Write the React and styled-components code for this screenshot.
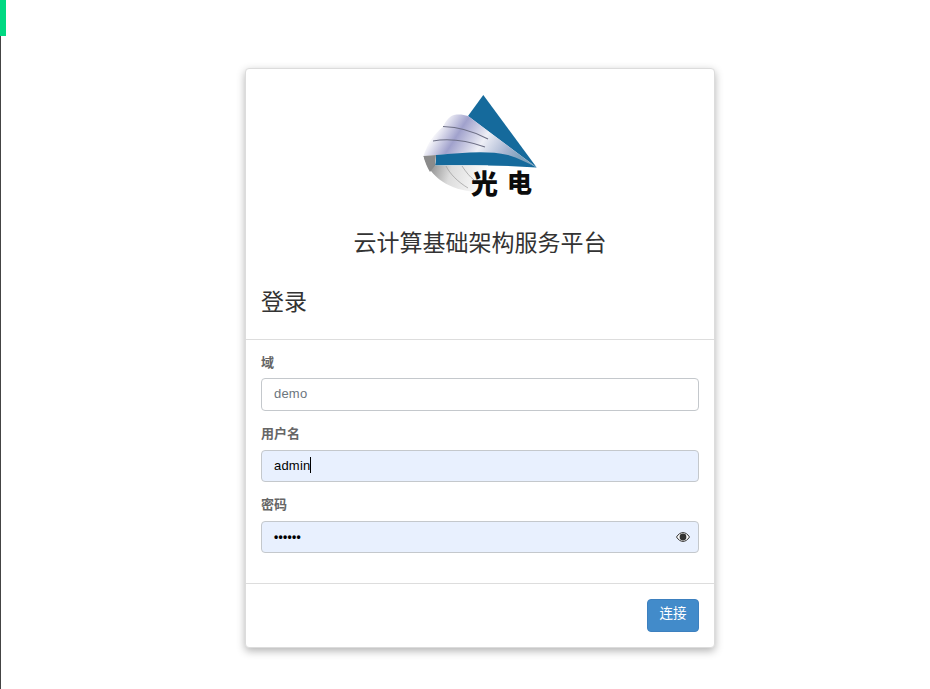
import React from 'react';
import styled, { createGlobalStyle } from 'styled-components';

const GlobalStyle = createGlobalStyle`
  html, body {
    margin: 0;
    padding: 0;
    background: #fff;
    font-family: "Liberation Sans", "Noto Sans CJK SC", sans-serif;
  }
`;

const Page = styled.div`
  width: 930px;
  height: 689px;
  overflow: hidden;
  position: relative;
  box-sizing: border-box;
  padding: 68px 0 0 245px;
`;

const SideLine = styled.div`
  position: absolute;
  left: 0;
  top: 36px;
  bottom: 0;
  width: 1px;
  background: #444;
`;

const Progress = styled.div`
  position: absolute;
  left: 0;
  top: 0;
  width: 6px;
  height: 36px;
  background: #00d982;
`;

const Card = styled.div`
  width: 470px;
  height: 580px;
  box-sizing: border-box;
  background: #fff;
  border: 1px solid #dcdcdc;
  border-radius: 4px;
  box-shadow: 0 3px 8px rgba(0, 0, 0, 0.3);
  display: flex;
  flex-direction: column;
`;

const LogoWrap = styled.div`
  height: 160px;
  padding-top: 26px;
  box-sizing: border-box;
  display: flex;
  justify-content: center;
`;

const Title = styled.h1`
  margin: 0;
  height: 28px;
  text-align: center;
  font-size: 23px;
  line-height: 28px;
  font-weight: 400;
  color: #333;
`;

const Header = styled.div`
  padding: 31px 15px 0;
  border-bottom: 1px solid #ddd;
  height: 83px;
  box-sizing: border-box;
`;

const Heading = styled.h2`
  margin: 0;
  font-size: 23px;
  line-height: 28px;
  font-weight: 400;
  color: #333;
`;

const Form = styled.div`
  padding: 13.6px 15px 0;
  height: 244px;
  box-sizing: border-box;
  border-bottom: 1px solid #ddd;
  display: flex;
  flex-direction: column;
  gap: 14.4px;
`;

const Field = styled.div`
  display: flex;
  flex-direction: column;
  gap: 6.6px;
`;

const Label = styled.label`
  font-size: 13px;
  line-height: 18px;
  height: 18px;
  font-weight: 700;
  color: #666;
`;

const InputBox = styled.div`
  position: relative;
  height: 32.4px;
  box-sizing: border-box;
  border: 1px solid #c4c8cc;
  border-radius: 4px;
  background: ${({ $filled }) => ($filled ? '#e8f0fe' : '#fff')};
  padding: 0 12px 1px;
  display: flex;
  align-items: center;
  font-size: 13px;
  letter-spacing: 0.2px;
  color: ${({ $filled }) => ($filled ? '#000' : '#6c757d')};
`;

const Caret = styled.span`
  display: inline-block;
  width: 1px;
  height: 16px;
  background: #000;
`;

const Dots = styled.span`
  font-size: 12px;
  letter-spacing: 0.3px;
  font-weight: 700;
`;

const EyeButton = styled.span`
  position: absolute;
  right: 8px;
  top: 8px;
  width: 14px;
  height: 14px;
  display: flex;
  align-items: center;
  justify-content: center;
`;

const Footer = styled.div`
  padding: 15px;
  display: flex;
  justify-content: flex-end;
`;

const ConnectButton = styled.button`
  width: 52px;
  height: 33px;
  border: 1px solid #3d80bf;
  border-radius: 4px;
  background: #428bca;
  color: #fff;
  font-family: inherit;
  font-size: 13.5px;
  line-height: 28px;
  padding: 0 0 3px;
`;

function Logo() {
  return (
    <svg width="120" height="110" viewBox="20 15 120 110">
      <defs>
        <linearGradient id="wing" x1="0" y1="0" x2="1" y2="0.3">
          <stop offset="0" stopColor="#d8d8de" />
          <stop offset="0.2" stopColor="#f4f4f9" />
          <stop offset="0.38" stopColor="#a0a1cc" />
          <stop offset="0.62" stopColor="#eeeff6" />
          <stop offset="0.85" stopColor="#a9b6d2" />
          <stop offset="1" stopColor="#7da2bd" />
        </linearGradient>
        <linearGradient id="under" x1="0" y1="0" x2="1" y2="0.15">
          <stop offset="0" stopColor="#6f6f6f" />
          <stop offset="0.45" stopColor="#dcdcdc" />
          <stop offset="1" stopColor="#ffffff" />
        </linearGradient>
      </defs>
      <polygon points="83.3,15 136.7,87.5 68,36" fill="#156a9c" />
      <path d="M23.5,76 C28,62 36,52 43,47 C46,40 50,36 54,35 C60,34 64,35 68,36 L136.7,87.5 C112,76 82,72 36,75 Z" fill="url(#wing)" />
      <path d="M43,46.5 C60,47 75,52 88,59" fill="none" stroke="#6d6f85" strokeWidth="1.1" />
      <path d="M33,61 C50,58 68,61 85,67" fill="none" stroke="#6d6f85" strokeWidth="1.1" />
      <path d="M36,75 C62,73 86,70 108,75 C118,78 128,83 136.7,87.5 C100,85 66,85 35,85.5 C36,82 36,78 36,75 Z" fill="#156a9c" />
      <path d="M23.5,76 C30,98 50,110 76,112 L92,100 L88,85.5 L35,85.5 Z" fill="url(#under)" />
      <path d="M23.5,76 L36,75 L35,85.5 L30,92 C27,87 25,82 23.5,76 Z" fill="#8b8b8b" />
      <path d="M46,86 C50,94 58,102 68,108" fill="none" stroke="#9a9a9a" strokeWidth="0.7" />
      <path d="M62,86 C66,92 70,97 74,100" fill="none" stroke="#9a9a9a" strokeWidth="0.7" />
      <text x="71" y="114" fontFamily="'Noto Sans CJK SC', sans-serif" fontSize="27" fontWeight="900" fill="#0c0c0c">光</text>
      <text x="107" y="112" fontFamily="'Noto Sans CJK SC', sans-serif" fontSize="25" fontWeight="900" fill="#0c0c0c">电</text>
    </svg>
  );
}

function EyeIcon() {
  return (
    <svg width="14" height="10" viewBox="0 0 14 10">
      <path d="M0.5,5 C2.5,1.8 4.8,0.6 7,0.6 C9.2,0.6 11.5,1.8 13.5,5 C11.5,8.2 9.2,9.4 7,9.4 C4.8,9.4 2.5,8.2 0.5,5 Z" fill="#fff" stroke="#333" strokeWidth="1" />
      <circle cx="7" cy="5" r="3.4" fill="#333" />
    </svg>
  );
}

export default function App() {
  return (
    <Page>
      <GlobalStyle />
      <SideLine />
      <Progress />
      <Card>
        <LogoWrap>
          <Logo />
        </LogoWrap>
        <Title>云计算基础架构服务平台</Title>
        <Header>
          <Heading>登录</Heading>
        </Header>
        <Form>
          <Field>
            <Label>域</Label>
            <InputBox>demo</InputBox>
          </Field>
          <Field>
            <Label>用户名</Label>
            <InputBox $filled>admin<Caret /></InputBox>
          </Field>
          <Field>
            <Label>密码</Label>
            <InputBox $filled>
              <Dots>••••••</Dots>
              <EyeButton><EyeIcon /></EyeButton>
            </InputBox>
          </Field>
        </Form>
        <Footer>
          <ConnectButton>连接</ConnectButton>
        </Footer>
      </Card>
    </Page>
  );
}
